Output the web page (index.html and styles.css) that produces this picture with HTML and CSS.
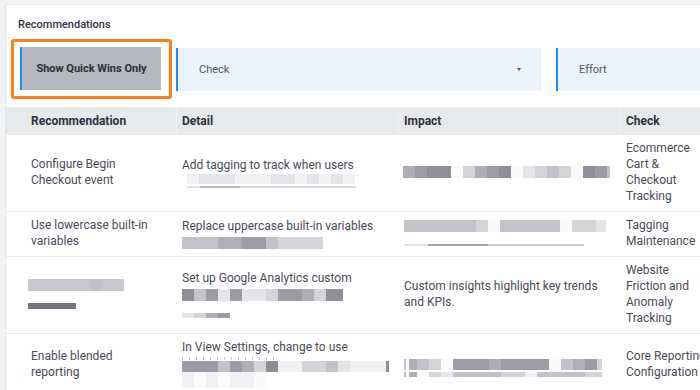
FILE: index.html
```html
<!DOCTYPE html>
<html lang="en">
<head>
<meta charset="utf-8">
<title>Recommendations</title>
<link rel="stylesheet" href="styles.css">
</head>
<body>
<div class="card">
  <div class="title">Recommendations</div>
  <div class="filters">
    <div class="quick">
      <button class="btn" type="button">Show Quick Wins Only</button>
    </div>
    <div class="dd check"><span>Check</span><i class="caret"></i></div>
    <div class="dd effort"><span>Effort</span></div>
  </div>
  <div class="table">
    <div class="row head">
      <div class="cell c1">Recommendation</div>
      <div class="cell c2">Detail</div>
      <div class="cell c3">Impact</div>
      <div class="cell c4">Check</div>
    </div>

    <div class="row">
      <div class="cell c1">Configure Begin Checkout event</div>
      <div class="cell c2">
        <div class="txt">Add tagging to track when users</div>
        <div class="bl h10 d1"><i class="k1"></i><i class="k2"></i><i class="k2"></i><i class="k2"></i><i class="k1"></i><i class="k1"></i><i class="k1"></i><i class="k2"></i><i class="k2"></i><i class="k1"></i><i class="k2"></i><i class="k1"></i><i class="k2"></i><i class="k1"></i></div>
        <div class="ul1"></div>
      </div>
      <div class="cell c3">
        <div class="bl h12 i1"><i class="k5"></i><i class="k6"></i><i class="k7"></i><i class="k7"></i><i class="k0"></i><i class="k3"></i><i class="k5"></i><i class="k6"></i><i class="k7"></i><i class="k0"></i><i class="k2"></i><i class="k3"></i><i class="k4"></i><i class="k3"></i><i class="k0"></i><i class="k7"></i><i class="k6"></i><i class="k4 n3"></i></div>
      </div>
      <div class="cell c4">Ecommerce Cart &amp; Checkout Tracking</div>
    </div>

    <div class="row">
      <div class="cell c1">Use lowercase built-in variables</div>
      <div class="cell c2">
        <div class="txt">Replace uppercase built-in variables</div>
        <div class="bl h12 d2"><i class="k4"></i><i class="k4"></i><i class="k4"></i><i class="k5"></i><i class="k5"></i><i class="k6"></i><i class="k6"></i><i class="k4"></i><i class="k3"></i><i class="k3"></i><i class="k3"></i><i class="k3 n9"></i></div>
      </div>
      <div class="cell c3">
        <div class="bl h12 i2"><i class="k4"></i><i class="k4"></i><i class="k4"></i><i class="k4"></i><i class="k4"></i><i class="k4"></i><i class="k3"></i><i class="k0"></i><i class="k4"></i><i class="k4"></i><i class="k4"></i><i class="k4"></i><i class="k4"></i><i class="k0"></i><i class="k3"></i><i class="k3"></i><i class="k2 n10"></i></div>
        <div class="ul2"></div>
      </div>
      <div class="cell c4">Tagging Maintenance</div>
    </div>

    <div class="row">
      <div class="cell c1">
        <div class="r3a"></div>
        <div class="r3b"></div>
      </div>
      <div class="cell c2">
        <div class="txt">Set up Google Analytics custom</div>
        <div class="bl h12 d3"><i class="k7"></i><i class="k4"></i><i class="k6"></i><i class="k2"></i><i class="k6"></i><i class="k2"></i><i class="k2"></i><i class="k3"></i><i class="k6"></i><i class="k6"></i><i class="k5"></i><i class="k3"></i><i class="k7 n17"></i></div>
        <div class="bl h5 d3b"><i class="k2"></i><i class="k3"></i><i class="k5"></i><i class="k6"></i></div>
      </div>
      <div class="cell c3">Custom insights highlight key trends and KPIs.</div>
      <div class="cell c4">Website Friction and Anomaly Tracking</div>
    </div>

    <div class="row">
      <div class="cell c1">Enable blended reporting</div>
      <div class="cell c2">
        <div class="txt">In View Settings, change to use</div>
        <div class="tops"></div>
        <div class="bl h11 d4"><i class="k6"></i><i class="k6"></i><i class="k6"></i><i class="k4"></i><i class="k6"></i><i class="k5"></i><i class="k3"></i><i class="k7"></i><i class="k1"></i><i class="k1"></i><i class="k3"></i><i class="k3"></i><i class="k4"></i><i class="k2"></i><i class="k1"></i><i class="k1"></i><i class="k1"></i><i class="k7 n3"></i></div>
        <div class="bl h16"><i class="k1"></i><i class="k0"></i><i class="k1"></i><i class="k0"></i><i class="k1"></i><i class="k1"></i><i class="k0"></i></div>
      </div>
      <div class="cell c3 imp4">
        <div class="bl h11 i4"><i class="k4 n2"></i><i class="k0 n3"></i><i class="k5 n8"></i><i class="k4"></i><i class="k3"></i><i class="k0"></i><i class="k6"></i><i class="k6"></i><i class="k6"></i><i class="k5"></i><i class="k6"></i><i class="k6"></i><i class="k6"></i><i class="k6"></i><i class="k0"></i><i class="k4"></i><i class="k5"></i><i class="k6"></i><i class="k3 n5"></i></div>
        <div class="bl h5 i4b"><i class="k4 n2"></i><i class="k0 n3"></i><i class="k5 n8"></i><i class="k0"></i><i class="k3"></i><i class="k2"></i><i class="k4"></i><i class="k4"></i><i class="k4"></i><i class="k4"></i><i class="k3"></i><i class="k3"></i><i class="k1"></i><i class="k4"></i><i class="k4"></i><i class="k4"></i><i class="k4"></i><i class="k3"></i><i class="k3 n5"></i></div>
      </div>
      <div class="cell c4">Core Reporting Configuration</div>
    </div>
  </div>
</div>
</body>
</html>
```

FILE: styles.css
```css
* { box-sizing: border-box; }

html, body {
  margin: 0;
  padding: 0;
}

body {
  width: 700px;
  height: 390px;
  overflow: hidden;
  background: #f1f3f5;
  font-family: Roboto, "Liberation Sans", Arial, sans-serif;
  color: #4a4b57;
}

.card {
  margin: 4px 0 0 5px;
  width: 740px;
  height: 420px;
  background: #ffffff;
  border: 1px solid #e4e7eb;
  border-right: none;
  border-radius: 3px 0 0 0;
  padding-top: 13px;
}

.title {
  padding-left: 12px;
  font-size: 11px;
  line-height: 14px;
  font-weight: 500;
  color: #30323e;
}

.filters {
  display: flex;
  align-items: center;
  margin-top: 7px;
  padding-left: 5px;
}

.quick {
  flex: none;
  border: 3px solid #ff7f17;
  border-radius: 3px;
  padding: 5px 8px 6px 6px;
  background: #ffffff;
}

.btn {
  display: flex;
  align-items: center;
  justify-content: center;
  width: 141px;
  height: 43px;
  margin: 0;
  padding: 0;
  background: #b4b7bd;
  border: none;
  border-left: 2px solid #1a8cff;
  font-family: Roboto, "Liberation Sans", Arial, sans-serif;
  font-size: 11px;
  font-weight: 700;
  color: #2c2e3c;
}

.dd {
  flex: none;
  display: flex;
  align-items: center;
  height: 43px;
  background: #eaf2fb;
  border-left: 2px solid #1a8cff;
  padding-left: 21px;
  font-size: 11px;
  color: #55565f;
}

.check {
  width: 365px;
  margin-left: 4px;
  justify-content: space-between;
  padding-right: 20px;
}

.effort {
  width: 200px;
  margin-left: 15px;
}

.caret {
  display: block;
  width: 0;
  height: 0;
  border-left: 2.5px solid transparent;
  border-right: 2.5px solid transparent;
  border-top: 3px solid #4f5058;
}

.table {
  margin-top: 8px;
}

.row {
  display: grid;
  grid-template-columns: 170px 222px 222px 96px;
  align-items: center;
  border-bottom: 1px solid #e9eaed;
}

.row.head {
  height: 28px;
  background: #e7eaed;
  border-bottom: none;
}

.head .cell {
  height: 28px;
  display: flex;
  align-items: center;
  padding-top: 0;
  padding-bottom: 0;
  font-weight: 700;
  color: #2f3140;
}

.head .c2, .head .c3, .head .c4 {
  border-left: 1px solid #eef0f3;
  padding-left: 5px;
}

.cell {
  font-size: 12px;
  line-height: 16px;
  padding: 5px 16px 7px 6px;
}

.c1 { padding-left: 25px; padding-right: 20px; }
.c4 { padding-right: 8px; }

.txt { white-space: nowrap; }

.bl {
  display: flex;
}

.bl i {
  display: block;
  width: 12px;
  height: 100%;
  flex: none;
}

.bl i.n2 { width: 2px; }
.bl i.n3 { width: 3px; }
.bl i.n5 { width: 5px; }
.bl i.n8 { width: 8px; }
.bl i.n9 { width: 9px; }
.bl i.n10 { width: 10px; }
.bl i.n17 { width: 17px; }

.h5 { height: 5px; }
.h10 { height: 10px; }
.h11 { height: 11px; }
.h12 { height: 12px; }
.h16 { height: 16px; }

.k0 { background: #fafafb; }
.k1 { background: #f1f1f3; }
.k2 { background: #e5e5e9; }
.k3 { background: #d4d4d9; }
.k4 { background: #c3c2c9; }
.k5 { background: #afaeb6; }
.k6 { background: #9d9ca6; }
.k7 { background: #8e8d98; }

.d1 { margin: 1px 0 0 5px; }

.ul1 {
  margin: 2px 0 0 5px;
  width: 169px;
  height: 2px;
  background: linear-gradient(90deg, #e2e2e6 0 13px, #b9b9c0 13px 53px, #dadade 53px);
}

.d2 { margin-top: 3px; }

.i1 { margin-left: -1px; }

.i2 { margin-left: 0; }

.ul2 {
  margin-top: 12px;
  width: 180px;
  height: 2px;
  background: linear-gradient(90deg, #e4e4e8 0 24px, #a3a2ab 24px 84px, #c9c9ce 84px);
}

.r3a {
  margin-left: -3px;
  width: 96px;
  height: 12px;
  background: linear-gradient(90deg, #c9c8ce 0 62px, #c3c2c9 62px 74px, #c9c8ce 74px);
}

.r3b {
  margin: 12px 0 0 -3px;
  width: 48px;
  height: 6px;
  background: #75737f;
}

.d3 { margin-top: 3px; }
.d3b { margin-top: 12px; }

.tops {
  margin-top: 2px;
  width: 95px;
  height: 3px;
  background: repeating-linear-gradient(90deg, #9a99a3 0 1px, transparent 1px 7px);
  opacity: 0.6;
}

.d4 { margin-top: 1px; }

.imp4 { padding-top: 14px; }

.i4b { margin-top: 2px; }
```
